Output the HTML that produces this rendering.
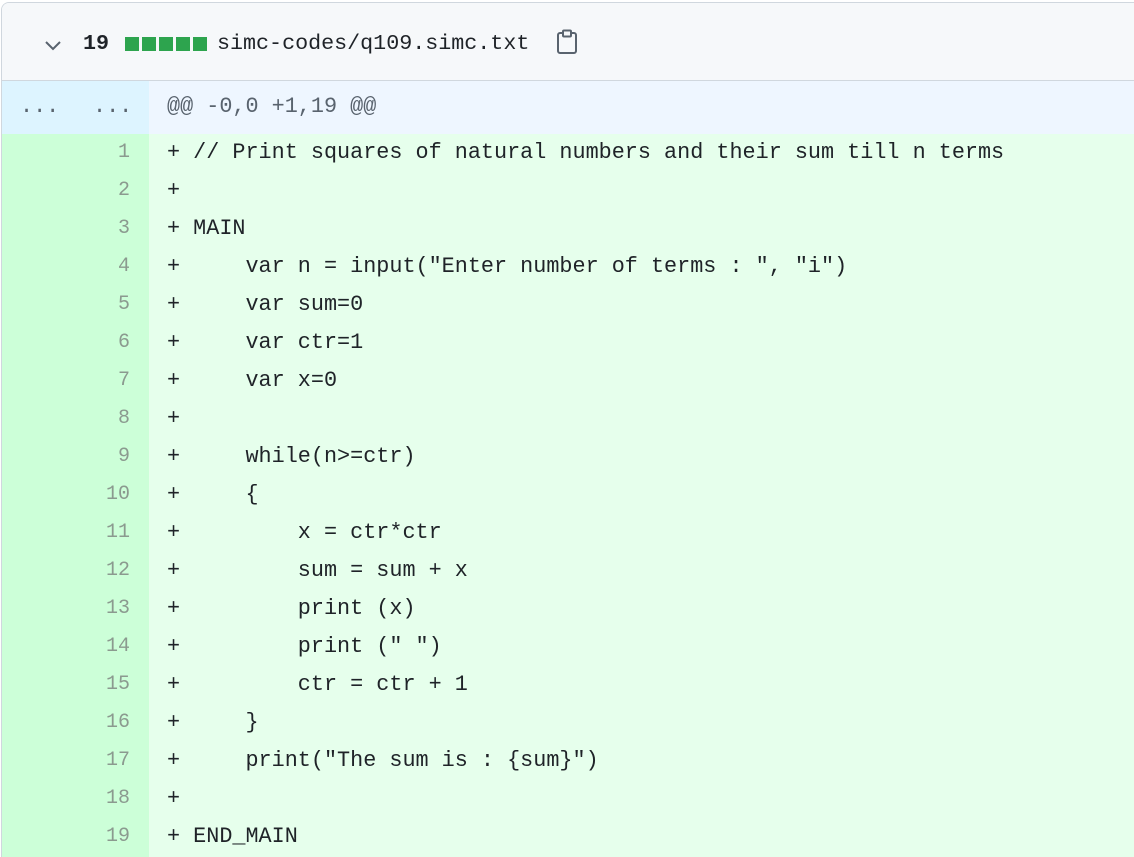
<!DOCTYPE html>
<html><head><style>
html,body{margin:0;background:#fff;width:1134px;height:856px;overflow:hidden;font-family:"Liberation Mono",monospace;}
.wrap{position:absolute;left:1px;top:2px;width:1133px;height:854px;border:1px solid #d0d7de;border-right:none;border-bottom:none;border-radius:8px 0 0 0;overflow:hidden;}
.hdr{height:77px;background:#f6f8fa;border-bottom:1px solid #d0d7de;position:relative;}
.hdr span{position:absolute;top:29px;font-size:21.7px;color:#1f2328;line-height:24px;}
.sq{position:absolute;top:34px;width:14px;height:14px;background:#2da44e;}
.hunk{height:53px;display:flex;font-size:21.8px;color:#59636e;line-height:51px;}
.hunk .g{width:147px;background:#ddf4ff;position:relative;}
.hunk .c{flex:1;background:#eef6ff;padding-left:18px;}
.row{height:38px;display:flex;font-size:21.8px;line-height:38px;color:#1f2328;}
.row .n{width:128px;padding-right:19px;text-align:right;background:#ccffd8;color:#8b9a8f;font-size:20px;}
.row .c{flex:1;background:#e6ffec;padding-left:18px;white-space:pre;}
</style></head><body>
<div class="wrap">
<div class="hdr">
<svg style="position:absolute;left:42px;top:37px" width="18" height="12" viewBox="0 0 18 12"><path d="M2 2 L9 9 L16 2" fill="none" stroke="#59636e" stroke-width="2"/></svg>
<span style="left:81px;font-weight:bold">19</span>
<div class="sq" style="left:123px"></div><div class="sq" style="left:140px"></div><div class="sq" style="left:157px"></div><div class="sq" style="left:174px"></div><div class="sq" style="left:191px"></div>
<span style="left:215px">simc-codes/q109.simc.txt</span>
<svg style="position:absolute;left:554px;top:26px" width="22" height="26" viewBox="0 0 22 26"><rect x="2" y="4" width="18" height="20" rx="2" fill="none" stroke="#59636e" stroke-width="2"/><rect x="7" y="1.5" width="8" height="6" rx="1" fill="#f6f8fa" stroke="#59636e" stroke-width="2"/></svg>
</div>
<div class="hunk"><div class="g"><span style="position:absolute;left:18px">...</span><span style="position:absolute;left:91px">...</span></div><div class="c">@@ -0,0 +1,19 @@</div></div>
<div class="row"><div class="n">1</div><div class="c">+ // Print squares of natural numbers and their sum till n terms</div></div>
<div class="row"><div class="n">2</div><div class="c">+</div></div>
<div class="row"><div class="n">3</div><div class="c">+ MAIN</div></div>
<div class="row"><div class="n">4</div><div class="c">+     var n = input("Enter number of terms : ", "i")</div></div>
<div class="row"><div class="n">5</div><div class="c">+     var sum=0</div></div>
<div class="row"><div class="n">6</div><div class="c">+     var ctr=1</div></div>
<div class="row"><div class="n">7</div><div class="c">+     var x=0</div></div>
<div class="row"><div class="n">8</div><div class="c">+</div></div>
<div class="row"><div class="n">9</div><div class="c">+     while(n>=ctr)</div></div>
<div class="row"><div class="n">10</div><div class="c">+     {</div></div>
<div class="row"><div class="n">11</div><div class="c">+         x = ctr*ctr</div></div>
<div class="row"><div class="n">12</div><div class="c">+         sum = sum + x</div></div>
<div class="row"><div class="n">13</div><div class="c">+         print (x)</div></div>
<div class="row"><div class="n">14</div><div class="c">+         print (" ")</div></div>
<div class="row"><div class="n">15</div><div class="c">+         ctr = ctr + 1</div></div>
<div class="row"><div class="n">16</div><div class="c">+     }</div></div>
<div class="row"><div class="n">17</div><div class="c">+     print("The sum is : {sum}")</div></div>
<div class="row"><div class="n">18</div><div class="c">+</div></div>
<div class="row"><div class="n">19</div><div class="c">+ END_MAIN</div></div>
<div class="row"><div class="n"></div><div class="c"></div></div>
</div>
</body></html>
